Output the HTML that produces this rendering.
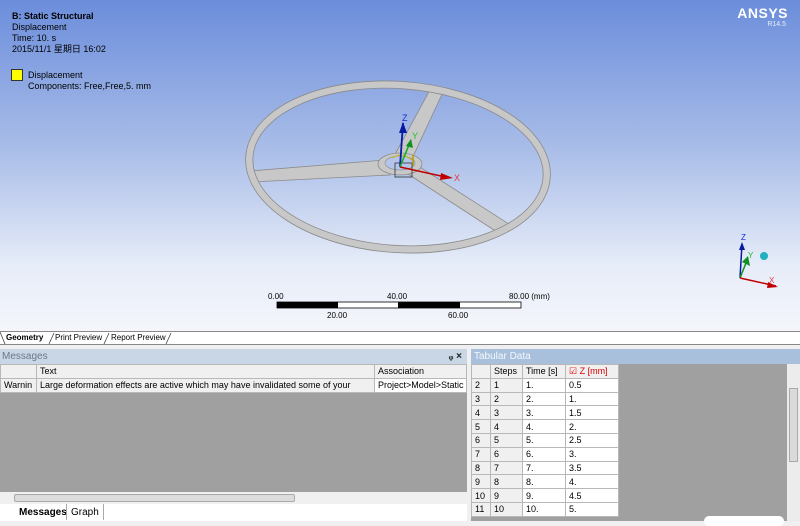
<!DOCTYPE html>
<html><head><meta charset="utf-8"><style>
*{margin:0;padding:0;box-sizing:border-box}
body{width:800px;height:521px;overflow:hidden;font-family:"Liberation Sans","Noto Sans CJK SC",sans-serif;font-size:9px;color:#000;background:#f0f0f0;position:relative}
.vp{position:absolute;left:0;top:0;width:800px;height:331px;background:linear-gradient(#6b8ddb 0%,#a9bde8 45%,#e6ecf8 80%,#f4f6fb 100%)}
.abs{position:absolute}
table{border-collapse:collapse}
td{border:1px solid #b8b8b8;height:13.8px;padding:0 3px;font-size:9px;white-space:nowrap;overflow:hidden}
</style></head><body>
<div class="vp">
 <div class="abs" style="left:12px;top:11px;line-height:11px;font-size:9px">
  <b>B: Static Structural</b><br>Displacement<br>Time: 10. s<br>2015/11/1 星期日 16:02
 </div>
 <div class="abs" style="left:11px;top:69px;width:12px;height:12px;background:#ffff00;border:1px solid #333"></div>
 <div class="abs" style="left:28px;top:70px;line-height:11px">Displacement<br>Components: Free,Free,5. mm</div>
 <div class="abs" style="right:12px;top:5px;color:#fff;font-weight:bold;font-size:14px;letter-spacing:0.5px">ANSYS</div>
 <div class="abs" style="right:14px;top:21px;color:#e8eefa;font-size:7px">R14.5</div>
 <svg class="abs" style="left:0;top:0" width="800" height="331">
  <g fill="#c8c8c8" stroke="#8a8a8a" stroke-width="0.8">
   <polygon points="392,160 432,86 444,90 410,163"/>
   <polygon points="385,160 250,171 251,182 390,175"/>
   <polygon points="405,172 500,234 512,226 415,164"/>
  </g>
  <ellipse cx="398" cy="167" rx="149" ry="82" transform="rotate(4 398 167)" fill="none" stroke="#8a8a8a" stroke-width="8"/>
  <ellipse cx="398" cy="167" rx="149" ry="82" transform="rotate(4 398 167)" fill="none" stroke="#c8c8c8" stroke-width="6.4"/>
  <ellipse cx="400" cy="164" rx="22" ry="11" fill="#c8c8c8" stroke="#8a8a8a" stroke-width="0.8"/>
  <ellipse cx="400" cy="163" rx="15" ry="7" fill="#b4c4ea" stroke="#8a8a8a" stroke-width="0.6"/>
  <rect x="395" y="163" width="17" height="14" fill="none" stroke="#333" stroke-width="0.8"/>
  <path d="M392 158 q10 -6 20 2" stroke="#c8b020" fill="none"/>
  <line x1="413" y1="166" x2="413" y2="155" stroke="#b09a00" stroke-width="1.5"/>
  <line x1="400" y1="167" x2="403" y2="123" stroke="#0a1aa0" stroke-width="1.8"/>
  <polygon points="399,133 407,133 403,122" fill="#0a1aa0"/>
  <text x="402" y="121" fill="#1a2ad0" font-size="9" font-family="Liberation Sans">Z</text>
  <line x1="400" y1="167" x2="411" y2="140" stroke="#10b020" stroke-width="1.6"/>
  <polygon points="406,146 413,148 411,139" fill="#109020"/>
  <text x="412" y="139" fill="#20c030" font-size="9" font-family="Liberation Sans">Y</text>
  <line x1="400" y1="167" x2="450" y2="178" stroke="#c00000" stroke-width="1.6"/>
  <polygon points="441,173 453,178 440,180" fill="#c00000"/>
  <text x="454" y="181" fill="#e04040" font-size="9" font-family="Liberation Sans">X</text>
  <line x1="740" y1="278" x2="742" y2="244" stroke="#0a1aa0" stroke-width="1.5"/>
  <polygon points="739,250 745,250 742,242" fill="#0a1aa0"/>
  <text x="741" y="240" fill="#1a2ad0" font-size="8" font-family="Liberation Sans">Z</text>
  <line x1="740" y1="278" x2="748" y2="258" stroke="#109020" stroke-width="1.5"/>
  <polygon points="742,262 750,266 748,256" fill="#109020"/>
  <text x="748" y="258" fill="#20c030" font-size="8" font-family="Liberation Sans">Y</text>
  <line x1="740" y1="278" x2="776" y2="286" stroke="#c00000" stroke-width="1.5"/>
  <polygon points="768,282 778,287 767,288" fill="#c00000"/>
  <text x="769" y="283" fill="#e04040" font-size="8" font-family="Liberation Sans">X</text>
  <circle cx="764" cy="256" r="4" fill="#20b0c0"/>
  <rect x="277" y="302" width="244" height="6" fill="#fff" stroke="#000" stroke-width="0.8"/>
  <rect x="277" y="302" width="61" height="6" fill="#000"/>
  <rect x="398" y="302" width="62" height="6" fill="#000"/>
  <g font-size="8" font-family="Liberation Sans" fill="#000">
   <text x="268" y="299">0.00</text><text x="387" y="299">40.00</text><text x="509" y="299">80.00 (mm)</text>
   <text x="327" y="318">20.00</text><text x="448" y="318">60.00</text>
  </g>
 </svg>
</div>
<div class="abs" style="left:0;top:331px;width:800px;height:14px;background:#fff;border-top:1px solid #888;border-bottom:1px solid #888;font-size:8px;line-height:12px">
 <span class="abs" style="left:6px;font-weight:bold">Geometry</span>
 <span class="abs" style="left:55px">Print Preview</span>
 <span class="abs" style="left:111px">Report Preview</span>
 <svg class="abs" style="left:0;top:0" width="180" height="13"><path d="M0 0 L5 12 M49 12 L54 1 M104 12 L109 1 M166 12 L171 1" stroke="#444" stroke-width="0.8" fill="none"/></svg>
</div>
<div class="abs" style="left:0;top:349px;width:467px;height:172px;background:#a0a0a0">
 <div style="height:15px;background:#c8d6e6;color:#6a7888;font-size:10px;line-height:15px;padding-left:2px">Messages<span style="position:absolute;right:5px;color:#222;font-weight:bold">ᵩ ×</span></div>
 <table style="background:#fff;width:467px;table-layout:fixed">
  <tr style="background:#f0f0f0"><td style="width:36px"></td><td style="width:338px">Text</td><td>Association</td></tr>
  <tr><td style="background:#f0f0f0">Warnin</td><td style="background:#f0f0f0">Large deformation effects are active which may have invalidated some of your</td><td>Project&gt;Model&gt;Static</td></tr>
 </table>
 <div class="abs" style="left:0;top:143px;width:467px;height:12px;background:#f0f0f0"><div style="position:absolute;left:14px;top:2px;width:281px;height:8px;background:#dcdcdc;border:1px solid #aaa;border-radius:2px"></div></div>
 <div class="abs" style="left:0;top:155px;width:467px;height:17px;background:#fff;font-size:10px;line-height:17px">
  <span class="abs" style="left:19px;font-weight:bold">Messages</span><span class="abs" style="left:66px;border-left:1px solid #aaa;border-right:1px solid #aaa;padding:0 4px;height:16px">Graph</span>
 </div>
</div>
<div class="abs" style="left:471px;top:349px;width:329px;height:172px;background:#a0a0a0">
 <div style="height:15px;background:#a8c0dc;color:#f4f8fc;font-size:10px;line-height:15px;padding-left:3px">Tabular Data</div>
 <table style="background:#fff;table-layout:fixed;width:148px;font-size:9px">
  <tr style="background:#f0f0f0"><td style="width:19px"></td><td style="width:32px">Steps</td><td style="width:43px">Time [s]</td><td style="color:#d00">☑ Z [mm]</td></tr>
  <tr><td style="background:#f0f0f0">2</td><td style="background:#f0f0f0">1</td><td>1.</td><td>0.5</td></tr>
  <tr><td style="background:#f0f0f0">3</td><td style="background:#f0f0f0">2</td><td>2.</td><td>1.</td></tr>
  <tr><td style="background:#f0f0f0">4</td><td style="background:#f0f0f0">3</td><td>3.</td><td>1.5</td></tr>
  <tr><td style="background:#f0f0f0">5</td><td style="background:#f0f0f0">4</td><td>4.</td><td>2.</td></tr>
  <tr><td style="background:#f0f0f0">6</td><td style="background:#f0f0f0">5</td><td>5.</td><td>2.5</td></tr>
  <tr><td style="background:#f0f0f0">7</td><td style="background:#f0f0f0">6</td><td>6.</td><td>3.</td></tr>
  <tr><td style="background:#f0f0f0">8</td><td style="background:#f0f0f0">7</td><td>7.</td><td>3.5</td></tr>
  <tr><td style="background:#f0f0f0">9</td><td style="background:#f0f0f0">8</td><td>8.</td><td>4.</td></tr>
  <tr><td style="background:#f0f0f0">10</td><td style="background:#f0f0f0">9</td><td>9.</td><td>4.5</td></tr>
  <tr><td style="background:#f0f0f0">11</td><td style="background:#f0f0f0">10</td><td>10.</td><td>5.</td></tr>
 </table>
 <div class="abs" style="right:0;top:15px;width:13px;height:157px;background:#ececec"><div style="position:absolute;left:2px;top:24px;width:9px;height:74px;background:#dadada;border:1px solid #aaa"></div></div>
 <div class="abs" style="left:233px;top:167px;width:80px;height:10px;background:#fff;border-radius:5px"></div>
</div>
</body></html>
